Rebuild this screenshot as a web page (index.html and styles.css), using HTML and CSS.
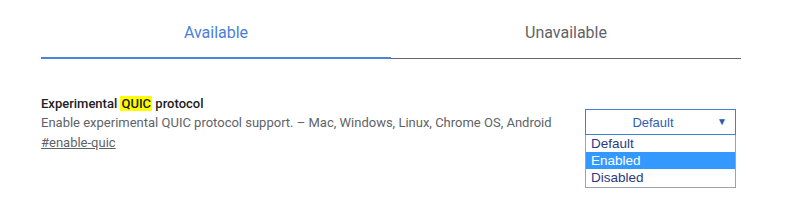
FILE: index.html
```html
<!DOCTYPE html>
<html>
<head>
<meta charset="utf-8">
<link rel="stylesheet" href="styles.css">
</head>
<body>
<div class="page">
  <div class="tabs">
    <div class="tab tab-active">Available</div>
    <div class="tab">Unavailable</div>
  </div>
  <div class="experiment">
    <div class="exp-text">
      <div class="exp-title">Experimental <span class="hl">QUIC</span> protocol</div>
      <div class="exp-desc">Enable experimental QUIC protocol support. – Mac, Windows, Linux, Chrome OS, Android</div>
      <a class="exp-link">#enable-quic</a>
    </div>
    <div class="select-wrap">
      <div class="select">
        <span class="select-value">Default</span>
        <span class="select-arrow">▼</span>
      </div>
      <ul class="options">
        <li class="option">Default</li>
        <li class="option option-sel">Enabled</li>
        <li class="option">Disabled</li>
      </ul>
    </div>
  </div>
</div>
</body>
</html>
```
FILE: styles.css
```css
* { box-sizing: border-box; }
html, body { margin: 0; padding: 0; background: #fff; }
body { font-family: Roboto, "Liberation Sans", sans-serif; min-height: 220px; }
.page { width: 786px; min-height: 220px; padding: 0 45px 0 41px; }
.tabs { display: flex; width: 700px; }
.tab {
  flex: 1;
  text-align: center;
  font-size: 16px;
  color: #5f6368;
  padding: 23px 0 16px;
  line-height: 18px;
  border-bottom: 1px solid #666;
  margin-top: 1px;
  height: 58px;
}
.tab-active {
  color: #4a80d8;
  border-bottom: 2px solid #4a84d8;
  height: 58px;
}
.experiment {
  display: flex;
  justify-content: space-between;
  align-items: flex-start;
  padding-top: 36px;
  width: 695px;
}
.exp-title { font-size: 13px; font-weight: 500; color: #202124; line-height: 17px; }
.hl { background: #ffff00; padding: 0 1px; }
.exp-desc { font-size: 13px; color: #5f6368; line-height: 16px; margin-top: 3px; }
.exp-link { display: inline-block; font-size: 13px; color: #5f6368; text-decoration: underline; line-height: 16px; margin-top: 4px; }
.select-wrap { position: relative; width: 151px; margin-top: 14px; }
.select {
  height: 26px;
  border: 1px solid #3f7fd5;
  display: flex;
  align-items: center;
  justify-content: center;
  padding-right: 15px;
  position: relative;
  font-family: "Liberation Sans", Arial, sans-serif;
  font-size: 13px;
  color: #2f5fb0;
}
.select-arrow { position: absolute; right: 8px; top: 6px; font-size: 10px; color: #2d5aa8; }
.options {
  position: absolute;
  top: 26px;
  left: 0;
  width: 151px;
  margin: 0;
  padding: 0 0 1px;
  list-style: none;
  border: 1px solid #9aa3b0;
  border-top: none;
  background: #fff;
  font-family: "Liberation Sans", Arial, sans-serif;
  font-size: 13.5px;
  color: #2a3a80;
  z-index: 2;
}
.option { height: 17px; line-height: 17px; padding-left: 5px; }
.option-sel { background: #3399ff; color: #fff; }
```
